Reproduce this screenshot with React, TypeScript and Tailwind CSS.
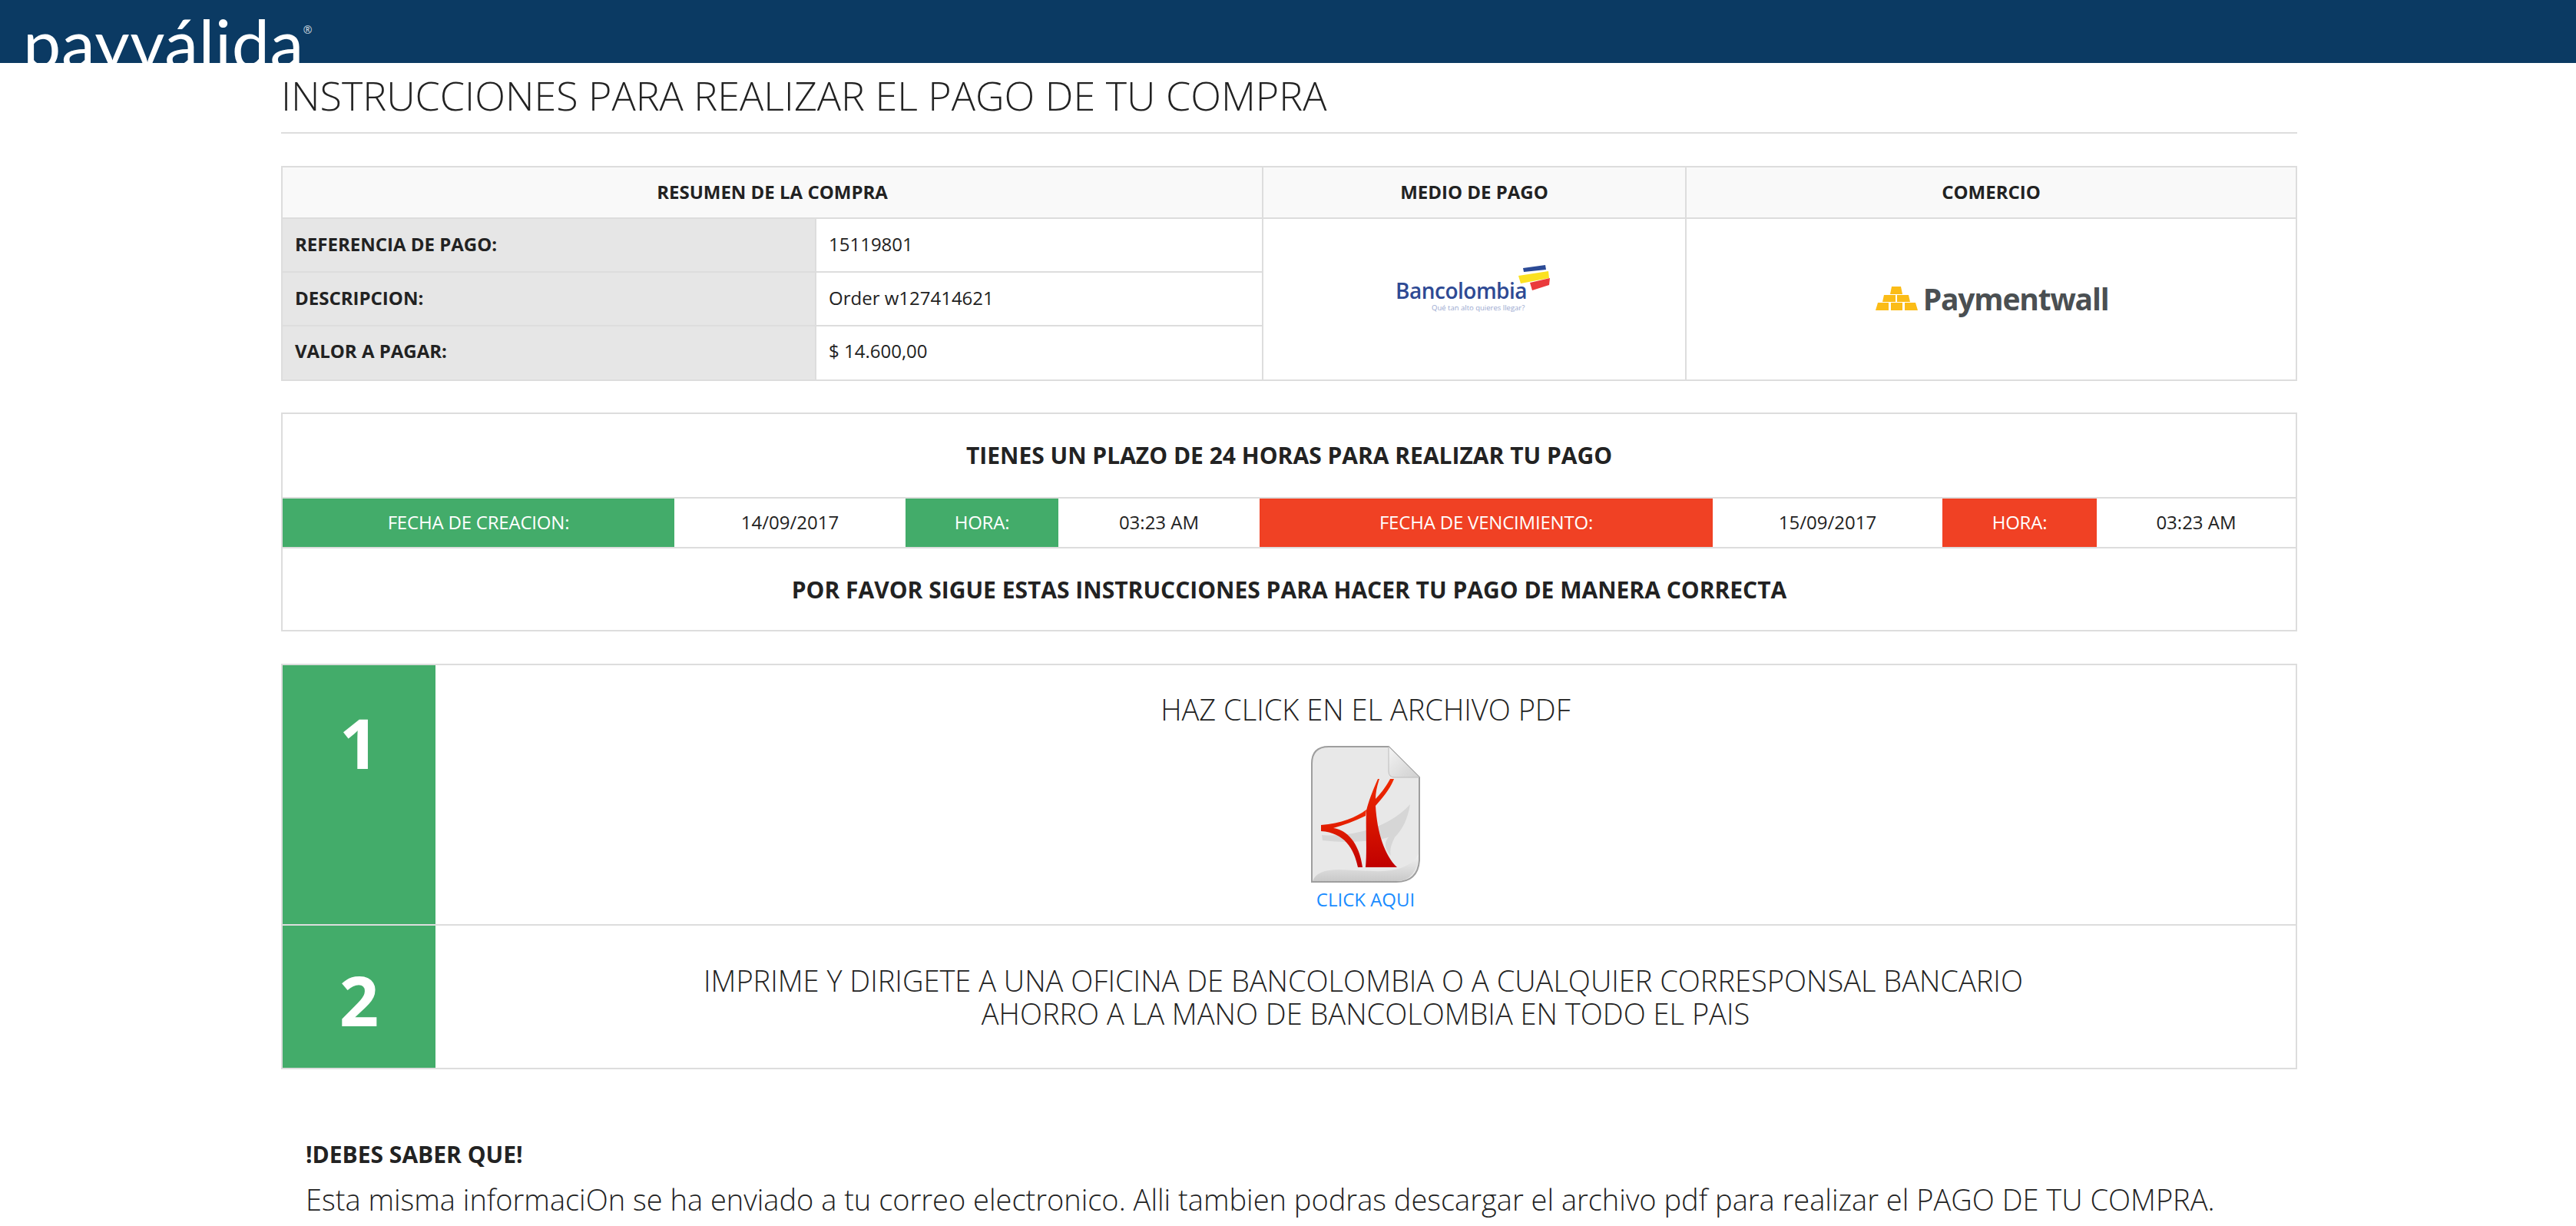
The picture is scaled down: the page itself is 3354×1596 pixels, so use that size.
import React from 'react';

const FONT = "font-['Open_Sans',sans-serif]";

const BancolombiaLogo = () => (
  <svg width="205" height="72" viewBox="0 0 205 72" className="mt-[-26px]">
    <polygon points="166,8 195,4 196,10 167,13" fill="#2b4a96" />
    <polygon points="160,18 199,12 200,21 163,28" fill="#fbe122" />
    <polygon points="175,27 201,21 200,30 178,37" fill="#ea3a3c" />
    <text x="0" y="48" fontFamily="Open Sans" fontWeight="600" fontSize="28" letterSpacing="-0.5" fill="#2e4a94">
      Bancolombia
    </text>
    <text x="47" y="63" fontFamily="Open Sans" fontSize="9.5" fill="#9aa8cf">
      Qué tan alto quieres llegar?
    </text>
  </svg>
);

const PaymentwallLogo = () => (
  <div className="flex items-center gap-[7px] mt-[-2px] ml-[2px]">
    <svg width="55" height="31" viewBox="0 0 55 31">
      <g fill="#fbbc17">
        <polygon points="21,0 33,0 35,10 19,10" />
        <polygon points="11,11 26,11 26,20 9,20" />
        <polygon points="28,11 43,11 45,20 28,20" />
        <polygon points="3,21 17,21 17,31 0,31" />
        <polygon points="20,21 35,21 35,31 20,31" />
        <polygon points="38,21 52,21 55,31 38,31" />
      </g>
    </svg>
    <span className="text-[39px] leading-none font-bold tracking-[-1.2px] text-[#4a4f52]">Paymentwall</span>
  </div>
);

const PdfIcon = () => (
  <svg width="142" height="178" viewBox="-1 -1 142 178">
    <defs>
      <linearGradient id="red" x1="0" y1="0" x2="0" y2="1">
        <stop offset="0" stopColor="#f02a00" />
        <stop offset="1" stopColor="#c00000" />
      </linearGradient>
      <linearGradient id="fold" x1="0" y1="0" x2="1" y2="1">
        <stop offset="0" stopColor="#f4f4f4" />
        <stop offset="1" stopColor="#cfcfcf" />
      </linearGradient>
      <linearGradient id="foot" x1="0" y1="0" x2="0" y2="1">
        <stop offset="0" stopColor="#f2f2f2" />
        <stop offset="1" stopColor="#c9c9c9" />
      </linearGradient>
    </defs>
    <path
      d="M0 22 Q0 0 22 0 L100 0 L140 40 L140 148 Q138 176 110 176 L0 176 Z"
      fill="#e8e8e8"
      stroke="#9e9e9e"
      strokeWidth="2"
    />
    <path d="M1 175 Q6 160 36 160 L80 162 Q125 164 139 140 Q137 175 110 175 Z" fill="url(#foot)" />
    <path d="M100 0 L140 40 L108 40 Q100 40 100 32 Z" fill="url(#fold)" stroke="#bcbcbc" strokeWidth="1" />
    <path
      d="M13 115 C48 118 98 108 128 75 C125 94 118 108 108 118 C103 128 101 135 103 142 C92 130 96 122 100 118 C75 125 40 125 14 122 Z"
      fill="#d6d6d6"
    />
    <path
      d="M86 42 C79 58 74 71 71 83 C70 108 72 135 70 157 L111 157 C95 142 85 112 83 77 C92 67 102 55 107 42 L102 42 C96 53 89 62 83 68 C83 60 85 51 88 42 Z"
      fill="url(#red)"
    />
    <path
      d="M12 102 C38 100 58 92 71 82 L70 90 C55 97 42 102 28 106 C45 108 62 125 66 157 L60 157 C55 132 42 112 12 110 Z"
      fill="url(#red)"
    />
  </svg>
);

const App: React.FC = () => {
  return (
    <div className={`${FONT} bg-white min-h-[1596px] text-[#222222] overflow-hidden`}>
      {/* Header */}
      <header className="h-[82px] bg-[#0b3a63] overflow-hidden pl-[30px]">
        <div className="flex items-start">
          <span className="font-['Lato',sans-serif] font-normal text-[88px] leading-[110px] tracking-[0.6px] text-white">
            payválida
          </span>
          <span className="text-[14px] text-white/80 mt-[28px] ml-[-1px]">®</span>
        </div>
      </header>

      <main className="ml-[366px] w-[2625px]">
        <h1 className="h-[92px] pt-[8px] border-b-2 border-[#dddddd] text-[52px] leading-[68px] font-light text-[#222222]">
          INSTRUCCIONES PARA REALIZAR EL PAGO DE TU COMPRA
        </h1>

        {/* Resumen */}
        <section className="mt-[42px] border-t-2 border-l-2 border-[#dddddd] grid grid-cols-[695px_582px_551px_1fr] grid-rows-[67px_70px_70px_71px] text-[24px]">
          <div className="col-span-2 bg-[#f9f9f9] border-r-2 border-b-2 border-[#dddddd] flex items-center justify-center font-bold pb-[2px]">
            RESUMEN DE LA COMPRA
          </div>
          <div className="bg-[#f9f9f9] border-r-2 border-b-2 border-[#dddddd] flex items-center justify-center font-bold pb-[2px]">
            MEDIO DE PAGO
          </div>
          <div className="bg-[#f9f9f9] border-r-2 border-b-2 border-[#dddddd] flex items-center justify-center font-bold pb-[2px]">
            COMERCIO
          </div>

          <div className="bg-[#e6e6e6] border-r-2 border-b-2 border-[#dddddd] flex items-center pl-[16px] pb-[2px] font-bold">
            REFERENCIA DE PAGO:
          </div>
          <div className="border-r-2 border-b-2 border-[#dddddd] flex items-center pl-[16px] pb-[2px]">15119801</div>
          <div className="row-span-3 border-r-2 border-b-2 border-[#dddddd] flex items-center justify-center">
            <BancolombiaLogo />
          </div>
          <div className="row-span-3 border-r-2 border-b-2 border-[#dddddd] flex items-center justify-center">
            <PaymentwallLogo />
          </div>

          <div className="bg-[#e6e6e6] border-r-2 border-b-2 border-[#dddddd] flex items-center pl-[16px] pb-[2px] font-bold">
            DESCRIPCION:
          </div>
          <div className="border-r-2 border-b-2 border-[#dddddd] flex items-center pl-[16px] pb-[2px]">
            Order w127414621
          </div>

          <div className="bg-[#e6e6e6] border-r-2 border-b-2 border-[#dddddd] flex items-center pl-[16px] pb-[5px] font-bold">
            VALOR A PAGAR:
          </div>
          <div className="border-r-2 border-b-2 border-[#dddddd] flex items-center pl-[16px] pb-[5px]">$ 14.600,00</div>
        </section>

        {/* Plazo */}
        <section className="mt-[41px] border-2 border-[#dddddd]">
          <div className="h-[108px] flex items-center justify-center text-[30px] font-bold pb-[2px]">
            TIENES UN PLAZO DE 24 HORAS PARA REALIZAR TU PAGO
          </div>
          <div className="h-[67px] border-y-2 border-[#dddddd] grid grid-cols-[510px_301px_199px_262px_590px_299px_201px_1fr] text-[24px] text-center">
            <div className="bg-[#43ac6a] text-white font-medium tracking-[-0.2px] flex items-center justify-center pb-[2px]">
              FECHA DE CREACION:
            </div>
            <div className="flex items-center justify-center pb-[2px]">14/09/2017</div>
            <div className="bg-[#43ac6a] text-white font-medium tracking-[-0.2px] flex items-center justify-center pb-[2px]">
              HORA:
            </div>
            <div className="flex items-center justify-center pb-[2px]">03:23 AM</div>
            <div className="bg-[#f04124] text-white font-medium tracking-[-0.2px] flex items-center justify-center pb-[2px]">
              FECHA DE VENCIMIENTO:
            </div>
            <div className="flex items-center justify-center pb-[2px]">15/09/2017</div>
            <div className="bg-[#f04124] text-white font-medium tracking-[-0.2px] flex items-center justify-center pb-[2px]">
              HORA:
            </div>
            <div className="flex items-center justify-center pb-[2px]">03:23 AM</div>
          </div>
          <div className="h-[106px] flex items-center justify-center text-[30px] font-bold">
            POR FAVOR SIGUE ESTAS INSTRUCCIONES PARA HACER TU PAGO DE MANERA CORRECTA
          </div>
        </section>

        {/* Pasos */}
        <section className="mt-[42px] border-2 border-[#dddddd]">
          <div className="flex h-[339px] border-b-2 border-[#dddddd]">
            <div className="w-[199px] bg-[#43ac6a] text-white font-bold text-[90px] leading-[122px] text-center pt-[39px]">
              1
            </div>
            <div className="flex-1 flex flex-col items-center font-light">
              <p className="text-[38px] leading-[50px] mt-[32px] text-[#222222]">HAZ CLICK EN EL ARCHIVO PDF</p>
              <div className="mt-[23px]">
                <PdfIcon />
              </div>
              <a className="text-[24px] leading-[32px] font-normal text-[#1a8cff] mt-[6px]">CLICK AQUI</a>
            </div>
          </div>
          <div className="flex h-[185px]">
            <div className="w-[199px] bg-[#43ac6a] text-white font-bold text-[90px] flex items-center justify-center pt-[8px]">
              2
            </div>
            <div className="flex-1 flex items-center justify-center text-center text-[38px] leading-[43px] font-light">
              <p>
                <span className="pr-[6px]">
                  IMPRIME Y DIRIGETE A UNA OFICINA DE BANCOLOMBIA O A CUALQUIER CORRESPONSAL BANCARIO
                </span>
                <br />
                AHORRO A LA MANO DE BANCOLOMBIA EN TODO EL PAIS
              </p>
            </div>
          </div>
        </section>

        {/* Nota */}
        <section className="mt-[92px] pl-[32px]">
          <p className="text-[30px] leading-[38px] font-bold">!DEBES SABER QUE!</p>
          <p className="text-[38px] leading-[50px] font-light mt-[14px] whitespace-nowrap">
            Esta misma informaciOn se ha enviado a tu correo electronico. Alli tambien podras descargar el archivo pdf
            para realizar el PAGO DE TU COMPRA.
          </p>
        </section>
      </main>
    </div>
  );
};

export default App;
